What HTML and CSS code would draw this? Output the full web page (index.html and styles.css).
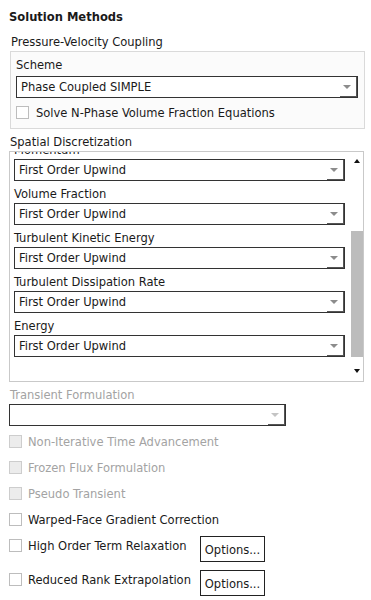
FILE: index.html
```html
<!DOCTYPE html>
<html lang="en">
<head>
    <meta charset="UTF-8">
    <meta name="viewport" content="width=device-width, initial-scale=1.0">
    <title>Solution Methods</title>
    <link rel="stylesheet" href="styles.css">
</head>
<body>

<div class="panel">
    <h1 class="title">Solution Methods</h1>

    <div class="section-label">Pressure-Velocity Coupling</div>
    <div class="group">
        <div class="field-label">Scheme</div>
        <div class="combo">
            <span class="combo-text">Phase Coupled SIMPLE</span>
            <span class="combo-btn"></span>
        </div>
        <div class="check-row group-check">
            <span class="box"></span>
            <span>Solve N-Phase Volume Fraction Equations</span>
        </div>
    </div>

    <div class="section-label spatial-label">Spatial Discretization</div>
    <div class="scroll-box">
        <div class="scroll-content">
            <div class="field-label">Momentum</div>
            <div class="combo">
                <span class="combo-text">First Order Upwind</span>
                <span class="combo-btn"></span>
            </div>
            <div class="field-label">Volume Fraction</div>
            <div class="combo">
                <span class="combo-text">First Order Upwind</span>
                <span class="combo-btn"></span>
            </div>
            <div class="field-label">Turbulent Kinetic Energy</div>
            <div class="combo">
                <span class="combo-text">First Order Upwind</span>
                <span class="combo-btn"></span>
            </div>
            <div class="field-label">Turbulent Dissipation Rate</div>
            <div class="combo">
                <span class="combo-text">First Order Upwind</span>
                <span class="combo-btn"></span>
            </div>
            <div class="field-label">Energy</div>
            <div class="combo">
                <span class="combo-text">First Order Upwind</span>
                <span class="combo-btn"></span>
            </div>
        </div>
        <div class="scrollbar">
            <div class="sb-up"><span class="arrow-up"></span></div>
            <div class="sb-track"><div class="sb-thumb"></div></div>
            <div class="sb-down"><span class="arrow-down"></span></div>
        </div>
    </div>

    <div class="section-label disabled transient-label">Transient Formulation</div>
    <div class="combo transient-combo">
        <span class="combo-text"></span>
        <span class="combo-btn light"></span>
    </div>

    <div class="check-row disabled">
        <span class="box"></span>
        <span>Non-Iterative Time Advancement</span>
    </div>
    <div class="check-row disabled">
        <span class="box"></span>
        <span>Frozen Flux Formulation</span>
    </div>
    <div class="check-row disabled">
        <span class="box"></span>
        <span>Pseudo Transient</span>
    </div>
    <div class="check-row">
        <span class="box"></span>
        <span>Warped-Face Gradient Correction</span>
    </div>

    <div class="option-row first">
        <div class="option-check">
            <span class="box"></span>
            <span>High Order Term Relaxation</span>
        </div>
        <button class="options-btn">Options...</button>
    </div>
    <div class="option-row">
        <div class="option-check">
            <span class="box"></span>
            <span>Reduced Rank Extrapolation</span>
        </div>
        <button class="options-btn">Options...</button>
    </div>
</div>

</body>
</html>
```

FILE: styles.css
```css
body {
    margin: 0;
    padding: 0;
    background-color: #ffffff;
    font-family: "DejaVu Sans Condensed", "DejaVu Sans", sans-serif;
    font-stretch: condensed;
    font-size: 12.8px;
    color: #1a1a1a;
}

.panel {
    width: 355px;
    padding-left: 9px;
}

.title {
    margin: 0;
    padding-top: 7px;
    font-size: 12.8px;
    font-weight: bold;
    line-height: 20px;
}

.section-label {
    margin-top: 6px;
    padding-left: 2px;
    line-height: 18px;
}

.spatial-label {
    margin-top: 4px;
    padding-left: 1px;
}

.disabled {
    color: #a3a3a3;
}

/* Pressure-Velocity group box */
.group {
    margin-left: 1px;
    width: 342px;
    padding: 4px 6px 5px 5px;
    border: 1px solid #dadada;
    background-color: #fbfbfb;
}

.field-label {
    line-height: 19px;
    white-space: nowrap;
}

.group .field-label {
    line-height: 18px;
    margin-bottom: 2px;
}

/* combo box */
.combo {
    display: flex;
    height: 20px;
    border: 1px solid #333;
    background-color: white;
    margin-bottom: 3px;
}

.combo-text {
    flex: 1;
    padding-left: 4px;
    line-height: 20px;
    white-space: nowrap;
}

.combo-btn {
    width: 16px;
    border-right: 1px solid #555;
    border-bottom: 1px solid #555;
    display: flex;
    align-items: center;
    justify-content: center;
}

.combo-btn::after {
    content: "";
    border-left: 4px solid transparent;
    border-right: 4px solid transparent;
    border-top: 4px solid #8c8c8c;
    margin-left: -2px;
}

.combo-btn.light::after {
    border-top-color: #c4c4c4;
}

/* check boxes */
.check-row {
    display: flex;
    align-items: center;
    height: 26px;
    white-space: nowrap;
}

.box {
    flex: none;
    width: 11px;
    height: 11px;
    border: 1px solid #bdbdbd;
    background-color: white;
    margin-right: 6px;
}

.disabled .box {
    border-color: #cdcdcd;
    background-color: #ececec;
}

.group-check {
    height: 22px;
    margin-top: 3px;
}

.group-check .box {
    margin-right: 7px;
}

/* spatial discretization scroll box */
.scroll-box {
    display: flex;
    width: 353px;
    height: 229px;
    border: 1px solid #c9c9c9;
    overflow: hidden;
}

.scroll-content {
    flex: 1;
    margin-top: -12px;
    padding: 0 4px;
}

.scrollbar {
    width: 14px;
    display: flex;
    flex-direction: column;
}

.sb-up {
    height: 17px;
    display: flex;
    align-items: center;
    justify-content: center;
}

.sb-down {
    height: 20px;
    display: flex;
    align-items: center;
    justify-content: center;
}

.arrow-up {
    border-left: 3px solid transparent;
    border-right: 3px solid transparent;
    border-bottom: 4px solid #111;
    margin-left: 2px;
}

.arrow-down {
    border-left: 3px solid transparent;
    border-right: 3px solid transparent;
    border-top: 4px solid #111;
    margin-left: 2px;
}

.sb-track {
    flex: 1;
}

.sb-thumb {
    margin-top: 62px;
    margin-left: 2px;
    width: 12px;
    height: 126px;
    background-color: #bcbcbc;
}

/* transient */
.transient-label {
    margin-top: 4px;
    padding-left: 1px;
}

.transient-combo {
    width: 275px;
    margin-bottom: 2px;
}

/* option rows */
.option-row {
    display: flex;
    align-items: flex-start;
    height: 26px;
    margin-top: 8px;
}

.option-row.first {
    margin-top: 4px;
}

.option-check {
    display: flex;
    align-items: center;
    width: 191px;
    height: 18px;
    white-space: nowrap;
}

.options-btn {
    width: 65px;
    height: 26px;
    padding: 0;
    border: 1px solid #222;
    background-color: white;
    font-family: inherit;
    font-stretch: condensed;
    font-size: 12.8px;
    color: #1a1a1a;
}
```
